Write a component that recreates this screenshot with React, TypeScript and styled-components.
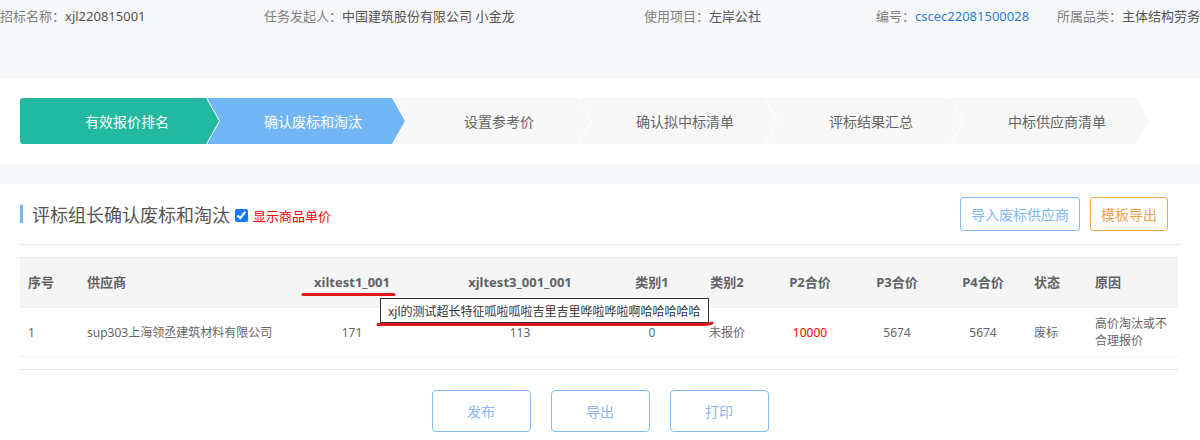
import React from "react";
import styled, { createGlobalStyle, css } from "styled-components";

const GlobalStyle = createGlobalStyle`
  html, body { margin: 0; padding: 0; background: #fff; }
  body {
    font-family: "Noto Sans", "Noto Sans CJK SC", sans-serif;
    width: 1200px;
    overflow: hidden;
  }
  * { box-sizing: border-box; }
`;

const Page = styled.div`
  width: 1200px;
  height: 440px;
  overflow: hidden;
  background: #f6f7f9;
`;

const InfoBar = styled.div`
  height: 78px;
  padding-top: 7px;
  display: grid;
  grid-template-columns: 264px 380px 232px 181px 400px;
  white-space: nowrap;
  font-size: 13px;
  line-height: 18px;
`;

const InfoItem = styled.div`
  color: #808080;
`;

const InfoValue = styled.span<{ $blue?: boolean }>`
  color: ${(p) => (p.$blue ? "#2f7dcc" : "#555")};
`;

const StepsBand = styled.div`
  background: #fff;
  padding: 20px 20px 20px 20px;
  display: flex;
`;

const stepColors: Record<string, string> = {
  done: "#22b9a0",
  active: "#72b6f6",
  todo: "#f7f7f7",
};

const Step = styled.div<{ $state: "done" | "active" | "todo"; $first?: boolean }>`
  width: 199px;
  height: 46px;
  flex: none;
  display: flex;
  align-items: center;
  justify-content: center;
  padding-left: 15px;
  font-size: 14px;
  color: ${(p) => (p.$state === "todo" ? "#666" : "#fff")};
  background: ${(p) => stepColors[p.$state]};
  ${(p) =>
    p.$first
      ? css`
          border-radius: 3px 0 0 3px;
          clip-path: polygon(0 0, 186px 0, 199px 50%, 186px 100%, 0 100%);
        `
      : css`
          margin-left: -13px;
          clip-path: polygon(1px 0, 186px 0, 199px 50%, 186px 100%, 1px 100%, 14px 50%);
        `}
`;

const Gap = styled.div`
  height: 20px;
`;

const Card = styled.div`
  background: #fff;
  height: 256px;
  padding: 13px 20px 0 20px;
`;

const CardHeader = styled.div`
  display: flex;
  align-items: center;
  height: 34px;
`;

const Title = styled.div`
  display: flex;
  align-items: center;
  border-left: 3px solid #72b6f6;
  padding-left: 9px;
  height: 18px;
  font-family: "Noto Sans CJK SC", sans-serif;
  font-size: 18px;
  line-height: 18px;
  color: #555;
`;

const CheckLabel = styled.label`
  display: flex;
  align-items: center;
  margin-left: 5px;
  font-family: "Noto Sans CJK SC", sans-serif;
  font-size: 13px;
  color: #f00;
  margin-top: 3px;
`;

const Check = styled.input`
  width: 13px;
  height: 13px;
  margin: 0 5px 0 0;
  accent-color: #1677ff;
`;

const HeaderActions = styled.div`
  margin-left: auto;
  display: flex;
  gap: 10px;
  margin-right: 12px;
`;

const OutlineButton = styled.button<{ $tone: "blue" | "orange" }>`
  height: 34px;
  padding: 0 10px;
  background: #fff;
  border-radius: 3px;
  font-family: "Noto Sans CJK SC", sans-serif;
  font-size: 14px;
  cursor: pointer;
  border: 1px solid ${(p) => (p.$tone === "blue" ? "#80bdf6" : "#f5a54d")};
  color: ${(p) => (p.$tone === "blue" ? "#80b8f2" : "#f5a04a")};
`;

const Divider = styled.div`
  height: 1px;
  background: #e4e7ee;
  margin-top: 13px;
`;

const TableWrap = styled.div`
  position: relative;
  margin-top: 12px;
  width: 1158px;
`;

const cols = "60px 198px 148px 188px 76px 74px 92px 82px 90px 60px 90px";

const HeadRow = styled.div`
  display: grid;
  grid-template-columns: ${cols};
  height: 50px;
  background: #f5f5f5;
  border-top: 1px solid #e8e8e8;
`;

const BodyRow = styled.div`
  display: grid;
  grid-template-columns: ${cols};
  height: 50px;
  border-top: 1px solid #ebeef5;
  border-bottom: 1px solid #ebeef5;
`;

const Cell = styled.div<{
  $align?: "left" | "center";
  $pl?: number;
  $red?: boolean;
  $head?: boolean;
  $wrap?: boolean;
}>`
  display: flex;
  align-items: center;
  justify-content: ${(p) => (p.$align === "left" ? "flex-start" : "center")};
  text-align: ${(p) => (p.$align === "left" ? "left" : "center")};
  padding-left: ${(p) => (p.$align === "left" ? `${p.$pl ?? 7}px` : "0")};
  padding-right: ${(p) => (p.$align === "left" ? "8px" : "0")};
  white-space: ${(p) => (p.$wrap ? "normal" : "nowrap")};
  font-size: ${(p) => (p.$head ? "13px" : "12px")};
  font-weight: ${(p) => (p.$head ? 700 : 400)};
  line-height: 17px;
  color: ${(p) => (p.$red ? "#f00" : p.$head ? "#606266" : "#666")};
`;

const Tooltip = styled.div`
  position: absolute;
  left: 360px;
  top: 41px;
  height: 25px;
  padding: 0 7px;
  display: flex;
  align-items: center;
  background: #fff;
  border: 1px solid #333;
  font-size: 12px;
  color: #333;
  white-space: nowrap;
`;

const Mark = styled.svg`
  position: absolute;
  left: 0;
  top: 0;
  overflow: visible;
  pointer-events: none;
`;

const BottomLine = styled.div`
  height: 1px;
  width: 1158px;
  background: #e4e7ee;
  margin-top: 12px;
`;

const Footer = styled.div`
  display: flex;
  justify-content: center;
  gap: 20px;
  margin-top: 20px;
  margin-left: -20px;
  width: 1200px;
`;

const FooterButton = styled.button`
  width: 99px;
  height: 42px;
  background: #fff;
  border: 1px solid #80bdf6;
  border-radius: 4px;
  font-family: "Noto Sans CJK SC", sans-serif;
  font-size: 14px;
  color: #8db5f0;
  cursor: pointer;
`;

const steps: { label: string; state: "done" | "active" | "todo" }[] = [
  { label: "有效报价排名", state: "done" },
  { label: "确认废标和淘汰", state: "active" },
  { label: "设置参考价", state: "todo" },
  { label: "确认拟中标清单", state: "todo" },
  { label: "评标结果汇总", state: "todo" },
  { label: "中标供应商清单", state: "todo" },
];

type Col = {
  head: string;
  value: React.ReactNode;
  align: "left" | "center";
  pl?: number;
  red?: boolean;
  wrap?: boolean;
};

const columns: Col[] = [
  { head: "序号", value: "1", align: "left", pl: 8 },
  { head: "供应商", value: "sup303上海领丞建筑材料有限公司", align: "left", pl: 7 },
  { head: "xiltest1_001", value: "171", align: "center" },
  { head: "xjltest3_001_001", value: "113", align: "center" },
  { head: "类别1", value: "0", align: "center" },
  { head: "类别2", value: "未报价", align: "center" },
  { head: "P2合价", value: "10000", align: "center", red: true },
  { head: "P3合价", value: "5674", align: "center" },
  { head: "P4合价", value: "5674", align: "center" },
  { head: "状态", value: "废标", align: "left", pl: 6 },
  { head: "原因", value: "高价淘汰或不合理报价", align: "left", pl: 7, wrap: true },
];

export default function App() {
  return (
    <>
      <GlobalStyle />
      <Page>
        <InfoBar>
          <InfoItem>
            招标名称：<InfoValue>xjl220815001</InfoValue>
          </InfoItem>
          <InfoItem>
            任务发起人：<InfoValue>中国建筑股份有限公司 小金龙</InfoValue>
          </InfoItem>
          <InfoItem>
            使用项目：<InfoValue>左岸公社</InfoValue>
          </InfoItem>
          <InfoItem>
            编号：<InfoValue $blue>cscec22081500028</InfoValue>
          </InfoItem>
          <InfoItem>
            所属品类：<InfoValue>主体结构劳务</InfoValue>
          </InfoItem>
        </InfoBar>

        <StepsBand>
          {steps.map((s, i) => (
            <Step key={s.label} $state={s.state} $first={i === 0}>
              {s.label}
            </Step>
          ))}
        </StepsBand>

        <Gap />

        <Card>
          <CardHeader>
            <Title>评标组长确认废标和淘汰</Title>
            <CheckLabel>
              <Check type="checkbox" defaultChecked />
              显示商品单价
            </CheckLabel>
            <HeaderActions>
              <OutlineButton $tone="blue">导入废标供应商</OutlineButton>
              <OutlineButton $tone="orange">模板导出</OutlineButton>
            </HeaderActions>
          </CardHeader>
          <Divider />

          <TableWrap>
            <HeadRow>
              {columns.map((c) => (
                <Cell key={c.head} $head $align={c.align} $pl={c.pl}>
                  {c.head}
                </Cell>
              ))}
            </HeadRow>
            <BodyRow>
              {columns.map((c) => (
                <Cell key={c.head} $align={c.align} $pl={c.pl} $red={c.red} $wrap={c.wrap}>
                  {c.value}
                </Cell>
              ))}
            </BodyRow>
            <Tooltip>xjl的测试超长特征呱啦呱啦吉里吉里哗啦哗啦啊哈哈哈哈哈</Tooltip>
            <Mark width="1" height="1">
              <line x1="283" y1="37.5" x2="374" y2="37.5" stroke="#e0191e" strokeWidth="3" strokeLinecap="round" />
              <path
                d="M358 67.5 L 680 67.5 Q 690 67.5 692 66"
                fill="none"
                stroke="#e0191e"
                strokeWidth="3"
                strokeLinecap="round"
              />
            </Mark>
          </TableWrap>
          <BottomLine />

          <Footer>
            <FooterButton>发布</FooterButton>
            <FooterButton>导出</FooterButton>
            <FooterButton>打印</FooterButton>
          </Footer>
        </Card>
      </Page>
    </>
  );
}
